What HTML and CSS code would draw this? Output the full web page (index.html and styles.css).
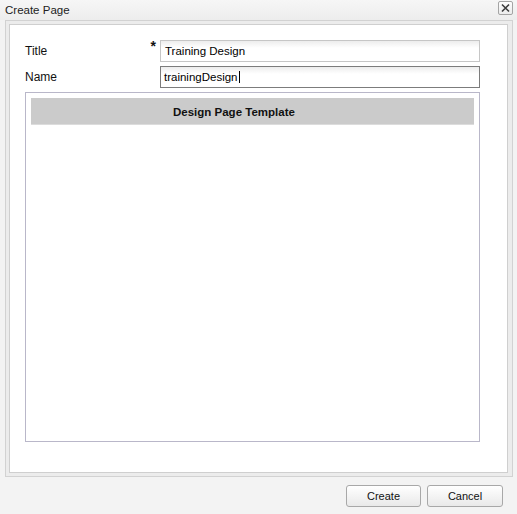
FILE: index.html
```html
<!DOCTYPE html>
<html>
<head>
<meta charset="utf-8">
<title>Create Page</title>
<link rel="stylesheet" href="styles.css">
</head>
<body>
<div class="dialog">
  <div class="titlebar">
    <span class="title">Create Page</span>
    <div class="close">
      <svg width="13" height="12" viewBox="0 0 13 12"><path d="M3 2.5 L10 9.5 M10 2.5 L3 9.5" stroke="#3c3c3c" stroke-width="1.6" fill="none"/></svg>
    </div>
  </div>
  <div class="frame">
    <div class="panel">
      <div class="row">
        <div class="label"><span>Title</span><span class="req">*</span></div>
        <div class="field">Training Design</div>
      </div>
      <div class="row">
        <div class="label"><span>Name</span></div>
        <div class="field focus"><span class="caret">trainingDesign</span></div>
      </div>
      <div class="templates">
        <div class="thead">Design Page Template</div>
      </div>
    </div>
  </div>
  <div class="footer">
    <div class="btn create">Create</div>
    <div class="btn cancel">Cancel</div>
  </div>
</div>
</body>
</html>
```

FILE: styles.css
```css
html, body {
  margin: 0;
  padding: 0;
  background: #f3f3f3;
}
body {
  font-family: "Liberation Sans", Arial, sans-serif;
  color: #000;
  width: 517px;
  height: 514px;
  overflow: hidden;
}
.dialog {
  width: 517px;
  height: 514px;
  background: #f3f3f3;
}
.titlebar {
  height: 20px;
  display: flex;
  align-items: flex-start;
  justify-content: space-between;
  background: linear-gradient(#f6f6f6, #ededed);
}
.title {
  font-size: 11.5px;
  color: #222;
  padding: 3px 0 0 5px;
  line-height: 14px;
}
.close {
  width: 13px;
  height: 12px;
  margin: 1px 4px 0 0;
  border: 1px solid #a4a4a4;
  border-radius: 2px;
  background: linear-gradient(#fdfdfd, #ececec);
  display: flex;
}
.frame {
  margin-left: 5px;
  width: 500px;
  height: 449px;
  border: 1px solid #d2d2d2;
  padding: 3px;
  background: #ececec;
}
.panel {
  width: 468px;
  height: 417px;
  border: 1px solid #cfcfcf;
  background: #fff;
  padding: 15px 14px 15px 15px;
  display: flex;
  flex-direction: column;
  gap: 4px;
}
.row {
  display: flex;
  height: 22px;
  align-items: center;
}
.label {
  width: 135px;
  display: flex;
  justify-content: space-between;
  align-items: flex-start;
  font-size: 12px;
  color: #111;
}
.req {
  margin-right: 4px;
  font-size: 14px;
  line-height: 12px;
  font-weight: bold;
  position: relative;
  top: -4px;
}
.field {
  box-sizing: border-box;
  width: 320px;
  height: 22px;
  border: 1px solid #c6c6c6;
  background: linear-gradient(#ededed, #ffffff 7px);
  padding: 0 4px;
  font-size: 11.5px;
  line-height: 21px;
  color: #000;
}
.field.focus {
  border-color: #7c7c7c;
  padding-left: 3px;
}
.caret {
  border-right: 1px solid #000;
  padding-right: 1px;
}
.templates {
  box-sizing: border-box;
  width: 455px;
  height: 350px;
  border: 1px solid #b9b7c9;
  padding: 5px;
}
.thead {
  height: 26px;
  border-bottom: 1px solid #dcdcdc;
  background: #cbcbcb;
  font-size: 11.5px;
  font-weight: bold;
  line-height: 28px;
  padding-left: 142px;
  color: #111;
}
.footer {
  display: flex;
  justify-content: flex-end;
  gap: 6px;
  padding: 8px 14px 0 0;
}
.btn {
  box-sizing: border-box;
  height: 22px;
  border: 1px solid #a8a8a8;
  border-radius: 3px;
  background: linear-gradient(#ffffff, #e9e9e9);
  font-size: 11px;
  line-height: 21px;
  text-align: center;
  color: #111;
}
.create { width: 75px; }
.cancel { width: 76px; }
```
